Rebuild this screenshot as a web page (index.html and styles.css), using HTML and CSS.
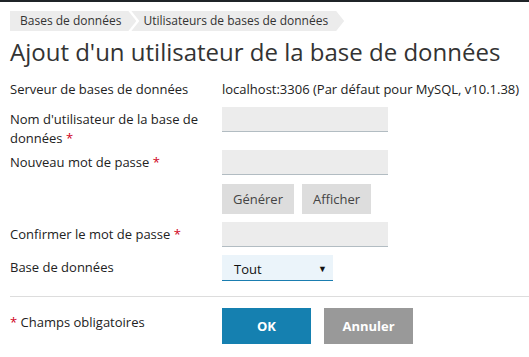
FILE: index.html
```html
<!DOCTYPE html>
<html lang="fr">
<head>
    <meta charset="UTF-8">
    <title>Ajout d'un utilisateur de la base de données</title>
    <link rel="stylesheet" href="styles.css">
</head>
<body>

<div class="page">
    <div class="breadcrumbs">
        <a class="crumb first" href="#">Bases de données</a>
        <a class="crumb" href="#">Utilisateurs de bases de données</a>
    </div>
    <h1>Ajout d'un utilisateur de la base de données</h1>

    <form class="user-form">
        <div class="form-row">
            <div class="label">Serveur de bases de données</div>
            <div class="field value">localhost:3306 (Par défaut pour MySQL, v10.1.38)</div>
        </div>
        <div class="form-row tall">
            <label class="label" for="login">Nom d'utilisateur de la base de données <span class="required">*</span></label>
            <div class="field"><input type="text" id="login" class="text-input"></div>
        </div>
        <div class="form-row">
            <label class="label" for="password">Nouveau mot de passe <span class="required">*</span></label>
            <div class="field"><input type="password" id="password" class="text-input"></div>
        </div>
        <div class="form-row">
            <div class="label"></div>
            <div class="field buttons">
                <button type="button" class="btn">Générer</button>
                <button type="button" class="btn">Afficher</button>
            </div>
        </div>
        <div class="form-row">
            <label class="label" for="confirm">Confirmer le mot de passe <span class="required">*</span></label>
            <div class="field"><input type="password" id="confirm" class="text-input"></div>
        </div>
        <div class="form-row">
            <label class="label" for="database">Base de données</label>
            <div class="field">
                <div class="select" id="database">
                    <span>Tout</span>
                    <span class="arrow">&#9660;</span>
                </div>
            </div>
        </div>

        <div class="form-footer">
            <div class="label"><span class="required">*</span> Champs obligatoires</div>
            <div class="field actions">
                <button type="submit" class="btn-action btn-ok">OK</button>
                <button type="button" class="btn-action btn-cancel">Annuler</button>
            </div>
        </div>
    </form>
</div>

</body>
</html>
```

FILE: styles.css
```css
body {
    margin: 0;
    font-family: "Open Sans", sans-serif;
    font-size: 13px;
    color: #222;
    background: #fff;
    border-top: 2px solid #1f2428;
}

.page {
    padding-left: 10px;
}

.breadcrumbs {
    display: flex;
    margin-top: 9px;
    height: 20px;
}

.crumb {
    display: block;
    height: 20px;
    line-height: 20px;
    font-size: 12px;
    color: #333;
    text-decoration: none;
    background: #ececec;
    padding: 0 16px 0 12px;
    margin-left: -5px;
    clip-path: polygon(0 0, calc(100% - 8px) 0, 100% 50%, calc(100% - 8px) 100%, 0 100%, 8px 50%);
}

.crumb.first {
    padding-left: 10px;
    padding-right: 15px;
    margin-left: 0;
    clip-path: polygon(0 0, calc(100% - 8px) 0, 100% 50%, calc(100% - 8px) 100%, 0 100%);
}

h1 {
    margin: 5px 0 9px;
    font-size: 24px;
    line-height: 32px;
    font-weight: normal;
    color: #333;
}

.form-row {
    display: flex;
    margin-bottom: 8px;
}

.form-row.tall {
    margin-bottom: 2px;
}

.label {
    width: 200px;
    margin-right: 12px;
    padding-top: 3px;
    line-height: 19px;
}

.required {
    color: #d0021b;
}

.value {
    padding-top: 3px;
    line-height: 19px;
}

.text-input {
    display: block;
    box-sizing: border-box;
    width: 166px;
    height: 25px;
    margin: 0;
    border: none;
    border-bottom: 1px solid #b2bcc2;
    background: #ececec;
    font-family: inherit;
    font-size: 13px;
}

.buttons {
    display: flex;
    gap: 8px;
    padding-top: 1px;
}

.btn {
    height: 30px;
    padding: 0 11px;
    border: none;
    background: #dddddd;
    color: #444;
    font-family: inherit;
    font-size: 13px;
}

.select {
    display: flex;
    justify-content: space-between;
    align-items: center;
    box-sizing: border-box;
    width: 111px;
    height: 26px;
    padding: 2px 6px 0 12px;
    background: #ebf4fa;
    border-bottom: 1px solid #1a7db0;
    font-size: 13px;
    color: #111;
}

.select .arrow {
    font-size: 9px;
    color: #111;
}

.form-footer {
    display: flex;
    margin-top: 15px;
    padding-top: 11px;
    border-top: 1px solid #dddddd;
}

.form-footer .label {
    padding-top: 5px;
}

.actions {
    display: flex;
    gap: 13px;
}

.btn-action {
    width: 89px;
    height: 36px;
    border: none;
    color: #fff;
    font-family: inherit;
    font-size: 13px;
    font-weight: bold;
}

.btn-ok {
    background: #1580b0;
}

.btn-cancel {
    background: #999999;
}
```
